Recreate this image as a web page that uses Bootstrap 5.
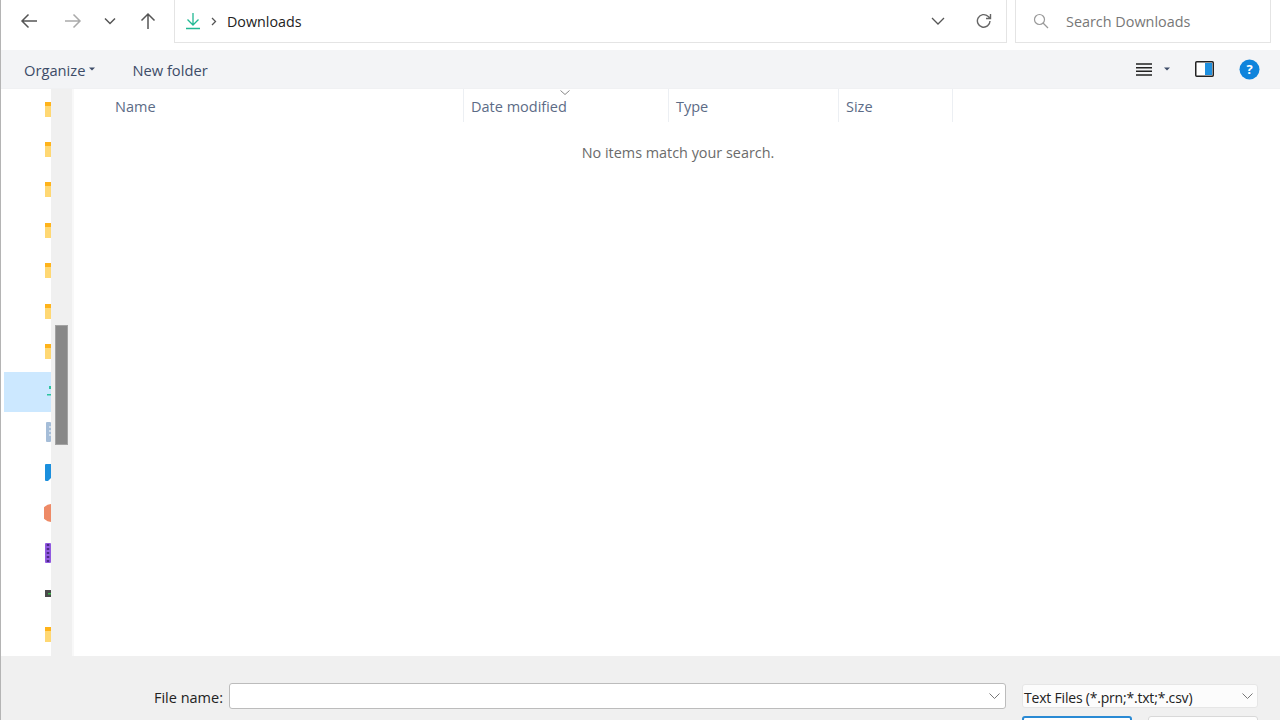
<!DOCTYPE html>
<html lang="en"><head><meta charset="utf-8"><title>Downloads</title>
<link href="https://cdn.jsdelivr.net/npm/bootstrap@5.3.0/dist/css/bootstrap.min.css" rel="stylesheet">
<style>
html,body{height:720px;overflow:hidden;background:#fff}
body{font-family:"Open Sans","Noto Sans",sans-serif;font-size:14.5px;color:#222}
.dlg{height:720px;width:1280px;border-left:1px solid #b4b4b4;overflow:hidden}
.topbar{height:50px;flex:none}
.navzone{width:173px;flex:none;padding-left:17px}
.navbtn{width:22px;height:22px;display:flex;align-items:center;justify-content:center;margin-top:10px}
.gap-fwd{margin-left:22px}.gap-hist{margin-left:15px}.gap-up{margin-left:16px}
.addr{width:833px;height:43px;border:1px solid #e4e4e4;border-top:0;flex:none;font-size:14.3px}
.addr-ico{margin-left:9px}
.addr-sep{margin-left:9px}
.addr-txt{margin-left:10px;padding-top:1px}
.addr-drop{margin-left:auto}
.addr-ref{margin:0 14px 0 31px}
.srch{width:256px;height:43px;border:1px solid #e4e4e4;border-top:0;flex:none;margin-left:8px;color:#777;font-size:14.4px}
.srch-ico{margin-left:17px}
.srch-txt{margin-left:17px;padding-top:2px}
.tools{height:39px;background:#f3f4f6;flex:none;color:#3d4c68;border-bottom:1px solid #f0f1f3;font-size:14.7px}
.tooltxt{padding-top:2px}
.t-org{margin-left:23px}
.t-car{margin-left:4px}
.t-new{margin-left:37px}
.t-view{margin-left:auto}
.t-vcar{margin-left:12px}
.t-pane{margin-left:25px}
.t-help{margin:0 20px 0 25px}
.mainarea{flex:1 1 auto;min-height:0}
.tree{width:50px;flex:none;overflow:hidden;padding-left:3px}
.trow{height:40.4px;display:flex;align-items:center;justify-content:flex-end;overflow:hidden}
.trow svg{display:block;flex:none}
.trow-on{background:#cce8ff;height:40px;margin-top:.4px}
.sbtrack{width:21px;flex:none;background:#f0f0f0;padding:236px 4px 0 4px}
.sbthumb{height:120px;background:#888;border:1px solid #a3a3a3}
.listpane{flex:1 1 auto;border-left:2px solid #f8f8f8;min-width:0}
.colhead{height:33px;color:#5c6b86;font-size:14.5px}
.hcell{border-right:1px solid #eceff3;padding-top:7px;flex:none;position:relative}
.hname{width:390px;padding-left:41px}
.hdate{width:205px;padding-left:7px}
.htype{width:170px;padding-left:7px}
.hsize{width:114px;padding-left:7px}
.sortcaret{position:absolute;left:96px;top:1px}
.emptymsg{color:#6b6b6b;font-size:14.4px;margin-top:19.5px;padding-left:2px}
.foot{height:64px;flex:none;background:#f0f0f0;padding-top:27px}
.fname-lbl{width:222px;flex:none;text-align:right;line-height:29px;color:#222}
.fname-box{width:777px;height:26px;flex:none;margin-left:6px;background:#fff;border:1px solid #bcbcbc;border-radius:3px;padding-right:5px}
.fname-box input{border:0;outline:0;flex:1 1 auto;background:transparent;min-width:0}
.ftype{width:236px;height:24px;margin:1px 0 0 16px;flex:none;background:#fcfcfc;border:1px solid #e6e6e6;border-radius:3px;padding:0 4px 0 1px;color:#222}
.ftype-txt{font-size:14px;letter-spacing:-.2px;padding-top:2px}
.btnrow{margin-left:1021px;margin-top:4px}
.dlgbtn{width:110px;height:24px;background:#fdfdfd;border:1px solid #d8d8d8;border-radius:3px;padding:0}
.dlgbtn-main{border:2px solid #2a8ad4;background:#fff}
</style></head>
<body>
<div class="dlg d-flex flex-column">
  <div class="topbar d-flex">
    <div class="navzone d-flex">
      <div class="navbtn"><svg width="18" height="16" viewBox="0 0 18 16" fill="none" stroke="#555" stroke-width="1.5"><path d="M17 8H2M8.500 1.500 2 8l6.500 6.500"/></svg></div>
      <div class="navbtn gap-fwd"><svg width="18" height="16" viewBox="0 0 18 16" fill="none" stroke="#aaa" stroke-width="1.5"><path d="M1 8h15M9.500 1.500 16 8l-6.500 6.500"/></svg></div>
      <div class="navbtn gap-hist"><svg width="12" height="8" viewBox="0 0 12 8" fill="none" stroke="#555" stroke-width="1.500"><path d="M1 1.500 6 6.500l5-5"/></svg></div>
      <div class="navbtn gap-up"><svg width="16" height="18" viewBox="0 0 16 18" fill="none" stroke="#555" stroke-width="1.500"><path d="M8 17V2M1.500 8.500 8 2l6.500 6.500"/></svg></div>
    </div>
    <div class="addr d-flex align-items-center">
      <svg class="addr-ico" width="18" height="18" viewBox="0 0 18 18" fill="none" stroke="#21b893" stroke-width="1.300"><path d="M9 1v11.500M3.500 7.500 9 13l5.500-5.500M2 16.500h14"/></svg>
      <svg class="addr-sep" width="6" height="9" viewBox="0 0 6 9" fill="none" stroke="#555" stroke-width="1.300"><path d="M1 1l3.500 3.500L1 8"/></svg>
      <span class="addr-txt">Downloads</span>
      <svg class="addr-drop" width="14" height="8" viewBox="0 0 14 8" fill="none" stroke="#555" stroke-width="1.300"><path d="M1 1l6 6 6-6"/></svg>
      <svg class="addr-ref" width="16" height="16" viewBox="0 0 16 16" fill="none" stroke="#666" stroke-width="1.400"><path d="M14 8a6.300 6.300 0 1 1-2-4.700L14.500 5.500M14.500 1v4.500H10"/></svg>
    </div>
    <div class="srch d-flex align-items-center">
      <svg class="srch-ico" width="16" height="16" viewBox="0 0 16 16" fill="none" stroke="#999" stroke-width="1.200"><circle cx="6.500" cy="6.500" r="5"/><path d="M10 10l5 5"/></svg>
      <span class="srch-txt">Search Downloads</span>
    </div>
  </div>
  <div class="tools d-flex align-items-center">
    <span class="tooltxt t-org">Organize</span>
    <svg class="t-car" width="6" height="4" viewBox="0 0 6 4" fill="#3d4c68"><path d="M0 .500h6L3 3.500z"/></svg>
    <span class="tooltxt t-new">New folder</span>
    <svg class="t-view" width="16" height="13" viewBox="0 0 16 13" fill="none" stroke="#222" stroke-width="1.500"><path d="M0 1h16M0 4.700h16M0 8.300h16M0 12h16"/></svg>
    <svg class="t-vcar" width="6" height="4" viewBox="0 0 6 4" fill="#3d4c68"><path d="M0 .500h6L3 3.500z"/></svg>
    <svg class="t-pane" width="19" height="16" viewBox="0 0 19 16"><rect x=".750" y=".750" width="17.500" height="14.500" rx="1" fill="#fff" stroke="#222" stroke-width="1.500"/><rect x="10" y="2" width="7" height="12" fill="#1e90e0"/></svg>
    <svg class="t-help" width="21" height="21" viewBox="0 0 21 21"><circle cx="10.500" cy="10.500" r="10" fill="#0f84dc"/><text x="10.500" y="15" text-anchor="middle" fill="#fff" font-size="13" font-weight="700" font-family="Open Sans">?</text></svg>
  </div>
  <div class="mainarea d-flex">
    <div class="tree">
      <div class="trow"><svg width="6" height="15" viewBox="0 0 6 15"><rect width="6" height="15" fill="#ffd873"/><rect width="6" height="4" fill="#ffb31a"/></svg></div>
      <div class="trow"><svg width="6" height="15" viewBox="0 0 6 15"><rect width="6" height="15" fill="#ffd873"/><rect width="6" height="4" fill="#ffb31a"/></svg></div>
      <div class="trow"><svg width="6" height="15" viewBox="0 0 6 15"><rect width="6" height="15" fill="#ffd873"/><rect width="6" height="4" fill="#ffb31a"/></svg></div>
      <div class="trow"><svg width="6" height="15" viewBox="0 0 6 15"><rect width="6" height="15" fill="#ffd873"/><rect width="6" height="4" fill="#ffb31a"/></svg></div>
      <div class="trow"><svg width="6" height="15" viewBox="0 0 6 15"><rect width="6" height="15" fill="#ffd873"/><rect width="6" height="4" fill="#ffb31a"/></svg></div>
      <div class="trow"><svg width="6" height="15" viewBox="0 0 6 15"><rect width="6" height="15" fill="#ffd873"/><rect width="6" height="4" fill="#ffb31a"/></svg></div>
      <div class="trow"><svg width="6" height="15" viewBox="0 0 6 15"><rect width="6" height="15" fill="#ffd873"/><rect width="6" height="4" fill="#ffb31a"/></svg></div>
      <div class="trow trow-on"><svg width="4" height="12" viewBox="0 0 4 12"><rect x="2" y="0" width="2" height="3" fill="#2cc4a0"/><rect x="0" y="8" width="4" height="1.500" fill="#2cc4a0"/></svg></div>
      <div class="trow"><svg width="5" height="20" viewBox="0 0 5 20"><rect width="5" height="20" rx="1" fill="#a5bdd8"/><path d="M3 5h2M3 9h2M3 13h2" stroke="#fff"/></svg></div>
      <div class="trow"><svg width="6" height="18" viewBox="0 0 6 18"><path d="M0 1q0-1 1-1h5v14L3 17H1q-1 0-1-1z" fill="#1b8fdd"/></svg></div>
      <div class="trow"><svg width="7" height="18" viewBox="0 0 7 18"><path d="M7 0a9 9 0 0 0 0 18z" fill="#ee8a66"/></svg></div>
      <div class="trow"><svg width="6" height="20" viewBox="0 0 6 20"><rect width="6" height="20" rx="1" fill="#9159e0"/><path d="M3 1v18" stroke="#4b2a86" stroke-width="2.500" stroke-dasharray="2 2"/></svg></div>
      <div class="trow"><svg width="6" height="7" viewBox="0 0 6 7"><rect width="6" height="7" fill="#4a4a4a"/><rect x="3" y="3" width="3" height="1.500" fill="#3bb34a"/></svg></div>
      <div class="trow"><svg width="6" height="15" viewBox="0 0 6 15"><rect width="6" height="15" fill="#ffd873"/><rect width="6" height="4" fill="#ffb31a"/></svg></div>
    </div>
    <div class="sbtrack"><div class="sbthumb"></div></div>
    <div class="listpane">
      <div class="colhead d-flex">
        <div class="hcell hname">Name</div>
        <div class="hcell hdate">Date modified<svg class="sortcaret" width="10" height="5" viewBox="0 0 10 5" fill="none" stroke="#888"><path d="M.500.500 5 4.500 9.500.500"/></svg></div>
        <div class="hcell htype">Type</div>
        <div class="hcell hsize">Size</div>
      </div>
      <div class="emptymsg text-center">No items match your search.</div>
    </div>
  </div>
  <div class="foot">
    <div class="d-flex">
      <div class="fname-lbl">File name:</div>
      <div class="fname-box d-flex align-items-center">
        <input type="text" aria-label="File name">
        <svg width="11" height="6" viewBox="0 0 11 6" fill="none" stroke="#777"><path d="M.500.500l5 5 5-5"/></svg>
      </div>
      <div class="ftype d-flex align-items-center justify-content-between">
        <span class="ftype-txt">Text Files (*.prn;*.txt;*.csv)</span>
        <svg width="11" height="6" viewBox="0 0 11 6" fill="none" stroke="#777"><path d="M.500.500l5 5 5-5"/></svg>
      </div>
    </div>
    <div class="d-flex btnrow gap-3">
      <button class="btn dlgbtn dlgbtn-main" type="button"></button>
      <button class="btn dlgbtn" type="button"></button>
    </div>
  </div>
</div>
</body></html>
